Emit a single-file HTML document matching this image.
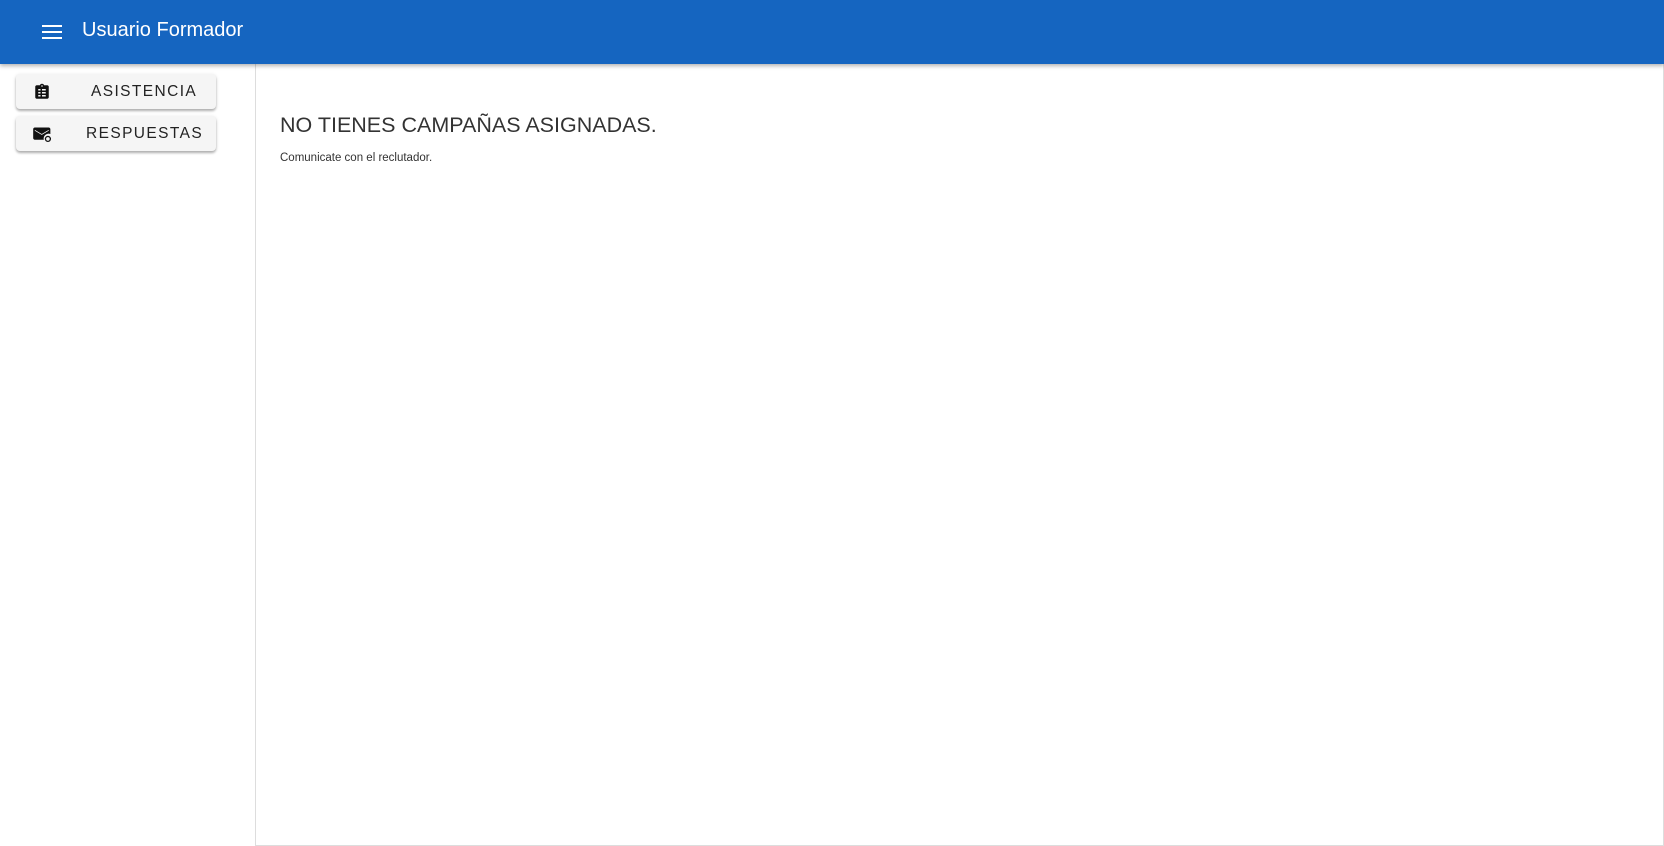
<!DOCTYPE html>
<html><head><meta charset="utf-8"><style>
body{margin:0;width:1664px;height:846px;overflow:hidden;background:#fff;font-family:"Liberation Sans",Arial,sans-serif;position:relative}
.hdr{position:absolute;left:0;top:0;width:1664px;height:64px;background:#1565c0;box-shadow:0 2px 4px rgba(0,0,0,.3);z-index:2}
.ham{position:absolute;left:42px;top:25px;width:20px}
.ham i{display:block;height:2px;background:#fff;margin-bottom:4px}
.ttl{position:absolute;left:82px;top:19px;color:#fff;font-size:20px}
.side{position:absolute;left:255px;top:64px;width:1407px;height:781px;border-left:1px solid #ddd;border-right:1px solid #ddd;border-bottom:1px solid #ddd}
.btn{position:absolute;left:16px;width:200px;height:35px;background:#f5f5f5;border-radius:4px;box-shadow:0 2px 2px rgba(0,0,0,.25),0 1px 4px rgba(0,0,0,.12);font-size:15.5px;letter-spacing:1.4px;color:#222}
.btn span{position:absolute;top:9px}
.btn svg{position:absolute;left:17px;top:9px}
h1{position:absolute;left:280px;top:113px;margin:0;font-weight:400;font-size:21.5px;color:#333}
p{position:absolute;left:280px;top:152px;margin:0;font-size:11.5px;color:#333}
</style></head><body>
<div class="hdr"><div class="ham"><i></i><i></i><i></i></div><div class="ttl">Usuario Formador</div></div>
<div class="side"></div>
<div class="btn" style="top:74px"><svg width="18" height="18" viewBox="0 0 24 24"><path fill="#111" d="M19 3h-4.2C14.4 1.8 13.3 1 12 1s-2.4.8-2.8 2H5c-1.1 0-2 .9-2 2v14c0 1.1.9 2 2 2h14c1.1 0 2-.9 2-2V5c0-1.1-.9-2-2-2zm-7 0c.6 0 1 .4 1 1s-.4 1-1 1-1-.4-1-1 .4-1 1-1zM7 8h3v2H7zm0 4h3v2H7zm0 4h3v2H7zm5-8h5v2h-5zm0 4h5v2h-5zm0 4h5v2h-5z"/></svg><span style="left:75px">ASISTENCIA</span></div>
<div class="btn" style="top:116px"><svg width="20" height="18" viewBox="0 0 24 22"><path fill="#111" d="M2 3h17c1 0 2 1 2 2v6a6 6 0 0 0-8 7H2c-1 0-2-1-2-2V5c0-1 1-2 2-2zm0 3v1l8.5 5L19 7V6l-8.5 5z"/><circle cx="18" cy="17" r="3" fill="none" stroke="#111" stroke-width="1.6"/></svg><span style="left:70px">RESPUESTAS</span></div>
<h1>NO TIENES CAMPAÑAS ASIGNADAS.</h1>
<p>Comunicate con el reclutador.</p>
</body></html>
